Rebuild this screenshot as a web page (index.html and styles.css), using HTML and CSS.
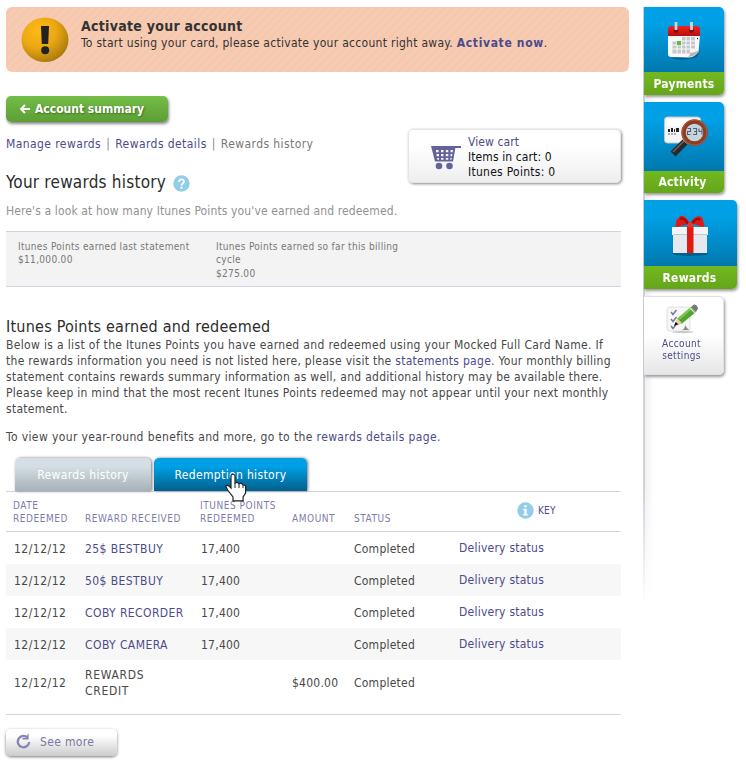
FILE: index.html
```html
<!DOCTYPE html>
<html lang="en">
<head>
<meta charset="utf-8">
<title>Your rewards history</title>
<link rel="stylesheet" href="styles.css">
</head>
<body>
<div class="page">
  <main class="main">
    <section class="alert">
      <svg class="alert-icon" width="48" height="46" viewBox="0 0 48 46">
        <defs><radialGradient id="gold" cx=".36" cy=".3" r=".75"><stop offset="0" stop-color="#ffb916"/><stop offset=".5" stop-color="#eba812"/><stop offset="1" stop-color="#a8780c"/></radialGradient></defs>
        <ellipse cx="24" cy="22.8" rx="23.5" ry="22.3" fill="url(#gold)"/>
        <path d="M20 9h8l-.8 18h-6.4z" fill="#222"/><circle cx="24.2" cy="33.2" r="4" fill="#222"/>
      </svg>
      <div class="alert-text">
        <h3>Activate your account</h3>
        <p>To start using your card, please activate your account right away. <a href="#">Activate now</a>.</p>
      </div>
    </section>

    <a href="#" class="btn-summary">
      <svg width="10" height="10" viewBox="0 0 10 10"><path d="M5 .8 1.200 5 5 9.200M1.500 5H10" fill="none" stroke="#fff" stroke-width="2"/></svg>
      <span>Account summary</span>
    </a>

    <div class="intro">
      <div class="intro-text">
        <nav class="crumbs"><a href="#">Manage rewards</a><i>|</i><a href="#">Rewards details</a><i>|</i><span>Rewards history</span></nav>
        <h1><span>Your rewards history</span>
          <svg width="17" height="17" viewBox="0 0 17 17"><circle cx="8.5" cy="8.5" r="8.2" fill="#93cee9"/><path d="M6 6.9C6 3.5 11 3.6 11 6.5c0 1.9-2.5 1.9-2.5 4" fill="none" stroke="#fff" stroke-width="1.8"/><rect x="7.5" y="11.7" width="2" height="2" fill="#fff"/></svg>
        </h1>
        <p class="sub">Here's a look at how many Itunes Points you've earned and redeemed.</p>
      </div>
      <aside class="cart">
        <svg width="30" height="24" viewBox="0 0 30 24" fill="#63639c">
          <path d="M0 0h30v2h-5.6L22 15.5H4z"/>
          <g fill="#f5f5f8"><path d="M5 4h2.6v2.2H5zM10 4h2.5v2.2H10zM14.8 4h2.5v2.2h-2.5zM19.5 4H22l-.4 2.2h-2zM5.500 8H8v2.200H5.700zM10 8h2.500v2.200H10zM14.800 8h2.500v2.200h-2.500zM19.500 8h1.900l-.4 2.200h-1.500zM6.100 12H8v1.800H6.400zM10 12h2.500v1.800H10zM14.800 12h2.500v1.800h-2.500zM19.300 12h1.400l-.3 1.800h-1.100z"/></g>
          <circle cx="8" cy="20" r="3.3"/><circle cx="18.5" cy="20" r="3.3"/>
        </svg>
        <div><a href="#">View cart</a><span>Items in cart: 0</span><span class="points">Itunes Points: 0</span></div>
      </aside>
    </div>

    <section class="totals">
      <div><span>Itunes Points earned last statement</span><span>$11,000.00</span></div>
      <div><span>Itunes Points earned so far this billing</span><span>cycle</span><span class="low">$275.00</span></div>
    </section>

    <h2>Itunes Points earned and redeemed</h2>
    <p class="copy">
      <span class="first">Below is a list of the Itunes Points you have earned and redeemed using your Mocked Full Card Name. If</span>
      <span>the rewards information you need is not listed here, please visit the <a href="#">statements page</a>. Your monthly billing</span>
      <span>statement contains rewards summary information as well, and additional history may be available there.</span>
      <span>Please keep in mind that the most recent Itunes Points redeemed may not appear until your next monthly</span>
      <span>statement.</span>
    </p>
    <p class="copy more">To view your year-round benefits and more, go to the <a href="#">rewards details page.</a></p>

    <div class="tabs">
      <a href="#" class="tab tab-off">Rewards history</a>
      <a href="#" class="tab tab-on">Redemption history
        <svg class="cursor" width="23" height="29" viewBox="0 0 23 29"><path d="M6 2.5Q8 0 10 2.5V10l2-.9 2 1.6 2-.7 2 1.8 2.6.8V20l-2.5 4v3.8H8V24l-5-6.5-2.300-4.200Q1.800 11.500 4 13l2 2z" fill="#fff" stroke="#222" stroke-width="1.2"/><path d="M10 10v5M14 11v4M18 12v3" stroke="#222" fill="none"/></svg>
      </a>
    </div>

    <section class="table">
      <div class="row head">
        <span>DATE<br>REDEEMED</span><span>REWARD RECEIVED</span><span>ITUNES POINTS<br>REDEEMED</span><span>AMOUNT</span><span>STATUS</span>
        <a href="#" class="key"><svg width="17" height="17" viewBox="0 0 17 17"><circle cx="8.5" cy="8.5" r="8.2" fill="#93cee9"/><path d="M7.300 3.300h2.400v2H7.300zM6.300 6.800h3.400v5.100h1v1.500H6.300v-1.500h1V8.300h-1z" fill="#fff"/></svg>KEY</a>
      </div>
      <div class="row"><span class="date">12/12/12</span><a href="#" class="name">25$ BESTBUY</a><span class="num">17,400</span><span></span><span>Completed</span><a href="#" class="ds">Delivery status</a></div>
      <div class="row alt"><span class="date">12/12/12</span><a href="#" class="name">50$ BESTBUY</a><span class="num">17,400</span><span></span><span>Completed</span><a href="#" class="ds">Delivery status</a></div>
      <div class="row"><span class="date">12/12/12</span><a href="#" class="name">COBY RECORDER</a><span class="num">17,400</span><span></span><span>Completed</span><a href="#" class="ds">Delivery status</a></div>
      <div class="row alt"><span class="date">12/12/12</span><a href="#" class="name">COBY CAMERA</a><span class="num">17,400</span><span></span><span>Completed</span><a href="#" class="ds">Delivery status</a></div>
      <div class="row tall"><span class="date">12/12/12</span><span class="credit">REWARDS<br>CREDIT</span><span></span><span>$400.00</span><span>Completed</span></div>
    </section>

    <a href="#" class="see-more">
      <svg width="16" height="17" viewBox="0 0 16 17"><path d="M11.600 4.600A5.700 5.700 0 1 0 13.200 9" fill="none" stroke="#8686b4" stroke-width="2.3"/><path d="M12.600 0v6.600H6.400V4.800h3.400z" fill="#8686b4"/></svg>
      <span>See more</span>
    </a>
  </main>

  <aside class="side">
    <a href="#" class="tile pay">
      <span class="pic"><svg width="34" height="40" viewBox="0 0 34 40">
        <defs><linearGradient id="red" x2="0" y2="1"><stop offset="0" stop-color="#f02420"/><stop offset="1" stop-color="#b90d0d"/></linearGradient></defs>
        <path d="M4 36q12 4 26-1l3-6z" fill="#000" opacity=".25"/>
        <path d="M1 13h32l-1.500 17q-4 5-9 5.500L4 35q-3 0-3-3z" fill="#f8f8f8"/>
        <path d="M1 14V8q0-4 3-4h26q3 0 3 4v6z" fill="url(#red)"/>
        <path d="M14.500 15h13.500v4H14.500zM5.500 19H28v4H5.500zM5.500 23H28v4H5.500zM5.500 27H24v4.500H5.500z" fill="#c6c8ca"/>
        <path d="M5.500 19H28M5.500 23H28M5.500 27H28M10 19v13M14.500 15v17M19 15v17M23.500 15v17" stroke="#f8f8f8"/>
        <rect x="10" y="19" width="4" height="4" fill="#5db840"/><path d="M20 35q3-1 3-4 5 0 9-3-2 7-12 7z" fill="#b5b7b9"/><circle cx="30.500" cy="16.500" r=".7"/>
        <g fill="#7b1010"><circle cx="9" cy="8.500" r="2.400"/><circle cx="24.500" cy="8.500" r="2.400"/></g>
        <path d="M9 0v8M24.500 0v8" stroke="#c9d3da" stroke-width="2.800"/>
      </svg></span><span class="label">Payments</span>
    </a>
    <a href="#" class="tile act">
      <span class="pic"><svg width="46" height="42" viewBox="0 0 46 42">
        <rect x="1.500" y="1" width="36" height="26" rx="3" fill="#f5f5f5" stroke="#bfc6cb"/>
        <rect x="4" y="3" width="31" height="7" fill="#fff"/>
        <path d="M5 13h2v3H5zM8 12h2v4H8zM11 13h1v3h-1zM13 12h3v4h-3z" fill="#222"/><path d="M5 18h9" stroke="#aaa" stroke-width="2" stroke-dasharray="2 1"/>
        <path d="M22 26 10 38" stroke="#292929" stroke-width="7"/><path d="m21 25-11 11" stroke="#666" stroke-width="1.500"/>
        <circle cx="31.500" cy="16.500" r="11" fill="#c3d6df" stroke="#8d3d23" stroke-width="4.500"/><circle cx="31.500" cy="16.500" r="12.500" fill="none" stroke="#c56646" opacity=".7"/>
        <path d="M24.500 12.500h3v3h-3v3h3M30 12.500h3.500v6H30m1-3h2.500M36 12.500v3h3m0-3v6" fill="none" stroke="#52626c" stroke-width="1.100"/>
      </svg></span><span class="label">Activity</span>
    </a>
    <a href="#" class="tile rew">
      <span class="pic"><svg width="38" height="42" viewBox="0 0 38 42">
        <ellipse cx="19" cy="38.500" rx="18" ry="2.500" fill="#004b73" opacity=".6"/>
        <path d="M1 12h36v8H1z" fill="#f4f5f8"/><path d="M2 20h34v18H2z" fill="#e5e8ed"/><path d="M2 19.500h34" stroke="#c4c8d0"/>
        <path d="M16 11h6.500v27H16z" fill="#e01a12"/>
        <path d="M19 9C15 0 9-1 8 3 4 4 6 8 4 12c6 0 10-4 15-2 4-3 8 2 14 2 1-4-1-3-1-7 0-5-9-6-13 4z" fill="#e01a12"/>
        <path d="M17 9C14 4 11 3 9 4m12 5c3-5 6-6 8-4" stroke="#8d0e0b" stroke-width="2" fill="none"/><rect x="16.500" y="7.500" width="5.500" height="5" rx="2" fill="#f3332a"/>
      </svg></span><span class="label">Rewards</span>
    </a>
    <a href="#" class="tile settings">
      <svg width="34" height="30" viewBox="0 0 34 30">
        <rect x="1" y="3" width="23" height="24" rx="3" fill="#f7f7f7" stroke="#e0e0e3"/>
        <ellipse cx="17" cy="28" rx="11" ry="1.200" fill="#ccc"/>
        <g fill="none" stroke="#77779e" stroke-width="1.500"><path d="m5 8 2 2.500L10.500 6M5 15l2 2.500 3.500-4.500M5 22l2 2.500 3.500-4.500"/></g>
        <path d="M16 26q3-1 3-5 3 5 5 5z" fill="#96888c"/>
        <path d="M9 21 11.500 14.500 25 3l5 5L16 19.500z" fill="#4fa52d"/><path d="M11.500 14.500 25 3l1.700 1.600-12.500 11z" fill="#79c84d"/>
        <path d="m25 3 3-2.500q3 0 4 4L30 8z" fill="#77777b"/><path d="m24 4 5 5" stroke="#ddd" stroke-width="1.300"/><path d="m8 22 3.500-7.500L16 19z" fill="#e7cfa9"/><path d="m8 22 1.500-4 3 2.300z" fill="#111"/>
      </svg>
      <span>Account<br>settings</span>
    </a>
  </aside>
</div>
</body>
</html>
```
FILE: styles.css
```css
* { box-sizing: border-box; }
body { margin: 0; background: #fff; color: #484848; font: 12px/16px "DejaVu Sans Condensed", "DejaVu Sans", sans-serif; font-stretch: condensed; white-space: nowrap; }
a { color: #4b4b8b; text-decoration: none; }
h1, h2, h3, p { margin: 0; font-weight: normal; }
svg { display: block; flex: none; }
.page { display: flex; align-items: flex-start; width: 746px; height: 767px; padding: 7px 0 0 6px; overflow: hidden; }
.main { width: 623px; margin-right: 15px; }

.alert { display: flex; height: 65px; padding: 10px 0 0 15px; border-radius: 6px; background: repeating-linear-gradient(135deg, #f7cbb2 0 4px, #f4c7ae 4px 6px); color: #333; }
.alert-text { margin-left: 12px; }
.alert h3 { font-size: 14px; line-height: 18px; font-weight: bold; letter-spacing: .28px; }
.alert p { line-height: 16px; letter-spacing: .29px; }
.alert a { font-weight: bold; letter-spacing: .65px; }

.btn-summary { display: flex; align-items: center; gap: 5px; width: 162px; height: 26px; margin-top: 24px; padding-left: 14px; border-radius: 5px; background: linear-gradient(#74bd47, #5c9e35); box-shadow: 1px 2px 3px #888; color: #fff; font-weight: bold; text-shadow: 1px 1px 2px #3b6f22; }

.intro { display: flex; justify-content: space-between; width: 615px; height: 109px; }
.crumbs { display: flex; gap: 5px; padding-top: 14px; letter-spacing: .42px; }
.crumbs i { font-style: normal; color: #888; }
.crumbs span { color: #777; }
h1 { display: flex; align-items: center; gap: 7px; height: 24px; margin-top: 18px; font-size: 17px; letter-spacing: .22px; color: #2c2c2c; }
h1 svg { margin-top: 2px; }
.sub { margin-top: 9px; color: #929292; letter-spacing: .13px; }
.cart { display: flex; width: 213px; height: 54px; margin-top: 7px; padding: 5px 0 0 22px; gap: 7px; border: 1px solid #e4e4e4; border-radius: 5px; background: linear-gradient(#fff 30%, #eee); box-shadow: 1px 1px 3px #888; color: #111; line-height: 15px; letter-spacing: .1px; }
.cart svg { margin-top: 11px; }
.cart div { display: flex; flex-direction: column; }
.points { letter-spacing: .27px; }

.totals { display: flex; width: 615px; height: 56px; padding: 8px 12px 0; border: solid #d3d3e3; border-width: 1px 0; background: #f3f3f3; color: #777; font-size: 10px; line-height: 13px; letter-spacing: .32px; }
.totals div { display: flex; flex-direction: column; width: 198px; }
.totals .low { margin-top: 1px; }
h2 { height: 20px; margin-top: 30px; line-height: 20px; font-size: 16px; letter-spacing: .23px; color: #2c2c2c; }
.copy { width: 615px; letter-spacing: .28px; }
.copy span { display: block; }
.copy .first { letter-spacing: .34px; }
.copy.more { margin-top: 12px; letter-spacing: .38px; }

.tabs { display: flex; gap: 3px; height: 33px; margin-top: 13px; padding-left: 9px; }
.tab { display: flex; justify-content: center; align-items: center; height: 33px; border-radius: 5px 5px 0 0; color: #fff; letter-spacing: .35px; box-shadow: 1px 0 3px #777; }
.tab-off { width: 136px; background: linear-gradient(#d3dfe5 25%, #a7b1b7); }
.tab-on { position: relative; width: 153px; background: linear-gradient(#00a0e6 25%, #005f8c); }
.cursor { position: absolute; left: 71px; top: 15px; }

.table { width: 615px; height: 224px; border: solid #d3d3e3; border-width: 1px 0; }
.row { display: grid; grid-template-columns: 71px 116px 91px 62px 105px 1fr; align-items: center; height: 32px; padding-left: 8px; padding-top: 1px; letter-spacing: .24px; }
.alt { background: #f7f7f7; }
.head { grid-template-columns: 72px 115px 92px 62px 105px 1fr; height: 40px; padding: 0 0 6px 7px; align-items: end; border-bottom: 1px solid #d3d3e3; color: #7d7dab; font-size: 10px; line-height: 13px; letter-spacing: .55px; }
.key { display: flex; align-items: center; align-self: start; gap: 4px; margin: 9px 0 0 58px; letter-spacing: .2px; }
.key svg { margin-top: 1px; }
.date, .credit { letter-spacing: .5px; }
.credit { letter-spacing: .7px; }
.name { letter-spacing: .42px; }
.ds { position: relative; top: -1px; }
.tall { height: 44px; }

.see-more { display: flex; align-items: center; gap: 8px; width: 111px; height: 27px; margin-top: 14px; padding: 0 0 2px 10px; border-radius: 5px; background: linear-gradient(#fff 25%, #ccc); box-shadow: 0 1px 3px #777; color: #7878a6; letter-spacing: .35px; }

.side { width: 100px; height: 599px; background: linear-gradient(90deg, #d0d0dd 0 2px, #f0f0f0 2px, #fff 11px) no-repeat; mask-image: linear-gradient(#000 80%, transparent); margin-left: -1px; padding-left: 1px; }
.tile { display: flex; flex-direction: column; width: 80px; border-radius: 0 5px 5px 0; overflow: hidden; box-shadow: 1px 2px 3px #999; color: #fff; font-weight: bold; letter-spacing: .2px; }
.pic { display: flex; align-items: center; justify-content: center; background: linear-gradient(#00a0e6 25%, #0078ae); }
.label { display: flex; align-items: center; justify-content: center; height: 23px; background: linear-gradient(#72b91f, #65a51b); }
.pay { height: 88px; }
.pay .pic { height: 65px; padding-top: 5px; }
.act { height: 91px; margin-top: 7px; }
.act .pic { height: 69px; padding-left: 3px; }
.act .label { height: 22px; padding-right: 3px; }
.rew { width: 93px; height: 89px; margin-top: 7px; }
.rew .pic { height: 66px; padding: 6px 2px 0 0; }
.rew .label { padding-right: 2px; }
.settings { align-items: center; height: 79px; margin-top: 7px; padding: 7px 4px 0 0; border: 1px solid #e0e0e8; border-left: 0; background: linear-gradient(#fff 50%, #e6e6e6); color: #4b4b8b; font-weight: normal; font-size: 10px; line-height: 12px; letter-spacing: .35px; text-align: center; }
.settings svg { margin-left: 3px; }
.settings > span { margin-top: 4px; }
```
